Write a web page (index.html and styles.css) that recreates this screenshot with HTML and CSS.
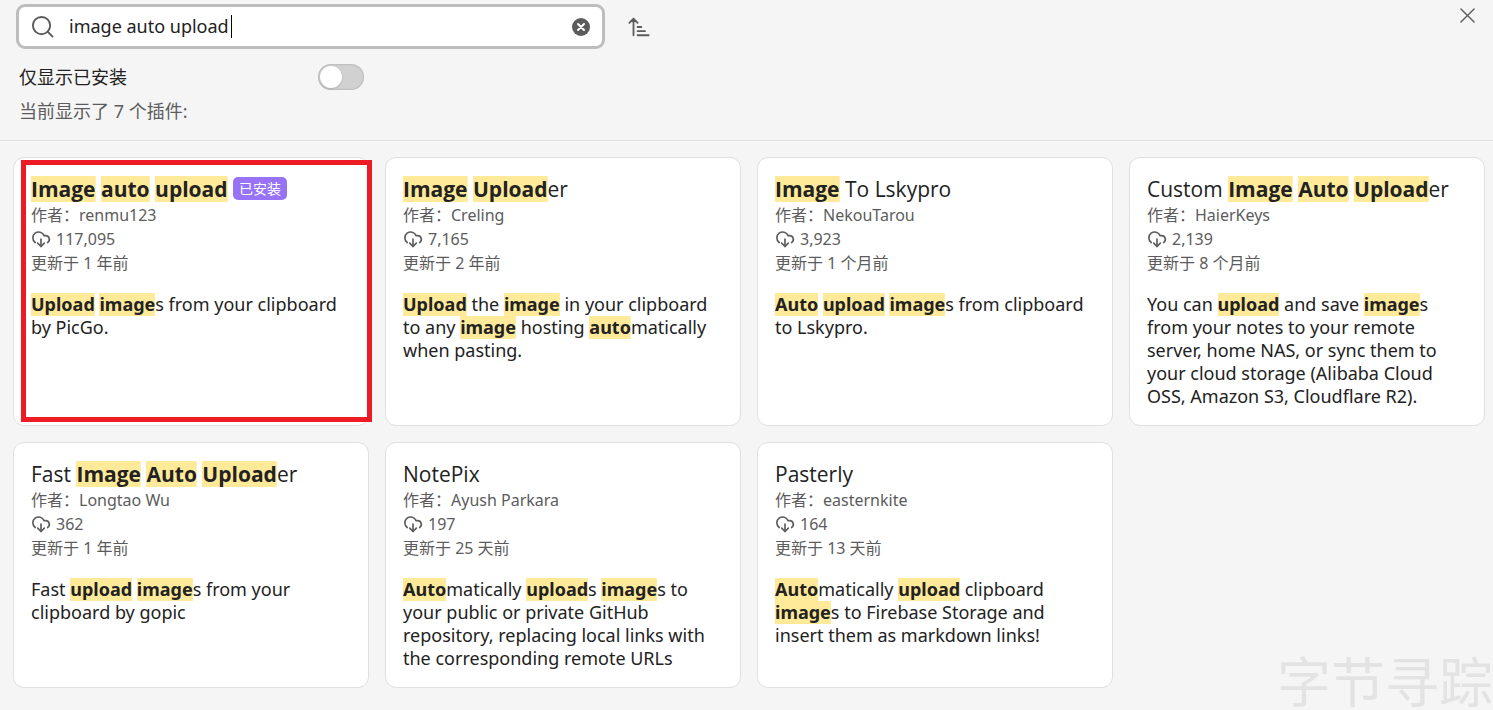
FILE: index.html
```
<!DOCTYPE html>
<html lang="zh-CN">
  <head>
    <meta charset="UTF-8" />
    <meta name="viewport" content="width=device-width, initial-scale=1.0" />
    <title>社区插件</title>
    <link rel="stylesheet" href="styles.css">
  </head>
  <body>
    <!-- Shared icon -->
    <svg class="icon-defs" aria-hidden="true">
      <symbol id="download" viewBox="0 0 24 24">
        <path d="M5 16.200A7 7 0 1 1 15.710 8h1.790a4.500 4.500 0 0 1 2.500 8.242" />
        <path d="M12 12v9" />
        <path d="m8 17 4 4 4-4" />
      </symbol>
    </svg>

    <header class="controls">
      <div class="search-row">
        <div class="search-box">
          <svg class="search-icon" viewBox="0 0 24 24">
            <circle cx="11" cy="11" r="9" />
            <path d="m17.5 17.5 5 5" />
          </svg>
          <input class="search-input" type="text" value="image auto upload" aria-label="搜索社区插件" />
          <span class="caret"></span>
          <button class="clear-button" aria-label="清除">
            <svg viewBox="0 0 18 18">
              <circle cx="9" cy="9" r="9" />
              <path d="m6 6 6 6M12 6l-6 6" />
            </svg>
          </button>
        </div>
        <button class="sort-button" aria-label="排序">
          <svg viewBox="0 0 24 24">
            <path d="M6 21V3M1.500 7.500 6 3l4.500 4.500M10.500 12h4M10.500 16.500h8M10.500 21h12" />
          </svg>
        </button>
        <button class="close-button" aria-label="关闭">
          <svg viewBox="0 0 16 16">
            <path d="m1 1 14 14M15 1 1 15" />
          </svg>
        </button>
      </div>
      <div class="setting">
        <label for="installed-only">仅显示已安装</label>
        <input class="toggle" type="checkbox" id="installed-only" />
      </div>
      <p class="summary">当前显示了 7 个插件:</p>
    </header>

    <main class="plugin-grid">
      <article class="card selected">
        <h2><mark>Image</mark> <mark>auto</mark> <mark>upload</mark> <span class="badge">已安装</span></h2>
        <p class="meta">作者：renmu123</p>
        <p class="meta"><svg class="download-icon"><use href="#download" /></svg>117,095</p>
        <p class="meta">更新于 1 年前</p>
        <p class="description"><mark>Upload</mark> <mark>image</mark>s from your clipboard by PicGo.</p>
      </article>
      <article class="card">
        <h2><mark>Image</mark> <mark>Upload</mark>er</h2>
        <p class="meta">作者：Creling</p>
        <p class="meta"><svg class="download-icon"><use href="#download" /></svg>7,165</p>
        <p class="meta">更新于 2 年前</p>
        <p class="description"><mark>Upload</mark> the <mark>image</mark> in your clipboard to any <mark>image</mark> hosting <mark>auto</mark>matically when pasting.</p>
      </article>
      <article class="card">
        <h2><mark>Image</mark> To Lskypro</h2>
        <p class="meta">作者：NekouTarou</p>
        <p class="meta"><svg class="download-icon"><use href="#download" /></svg>3,923</p>
        <p class="meta">更新于 1 个月前</p>
        <p class="description"><mark>Auto</mark> <mark>upload</mark> <mark>image</mark>s from clipboard to Lskypro.</p>
      </article>
      <article class="card">
        <h2>Custom <mark>Image</mark> <mark>Auto</mark> <mark>Upload</mark>er</h2>
        <p class="meta">作者：HaierKeys</p>
        <p class="meta"><svg class="download-icon"><use href="#download" /></svg>2,139</p>
        <p class="meta">更新于 8 个月前</p>
        <p class="description">You can <mark>upload</mark> and save <mark>image</mark>s from your notes to your remote server, home NAS, or sync them to your cloud storage (Alibaba Cloud OSS, Amazon S3, Cloudflare R2).</p>
      </article>
      <article class="card">
        <h2>Fast <mark>Image</mark> <mark>Auto</mark> <mark>Upload</mark>er</h2>
        <p class="meta">作者：Longtao Wu</p>
        <p class="meta"><svg class="download-icon"><use href="#download" /></svg>362</p>
        <p class="meta">更新于 1 年前</p>
        <p class="description">Fast <mark>upload</mark> <mark>image</mark>s from your clipboard by gopic</p>
      </article>
      <article class="card">
        <h2>NotePix</h2>
        <p class="meta">作者：Ayush Parkara</p>
        <p class="meta"><svg class="download-icon"><use href="#download" /></svg>197</p>
        <p class="meta">更新于 25 天前</p>
        <p class="description"><mark>Auto</mark>matically <mark>upload</mark>s <mark>image</mark>s to your public or private GitHub repository, replacing local links with the corresponding remote URLs</p>
      </article>
      <article class="card">
        <h2>Pasterly</h2>
        <p class="meta">作者：easternkite</p>
        <p class="meta"><svg class="download-icon"><use href="#download" /></svg>164</p>
        <p class="meta">更新于 13 天前</p>
        <p class="description"><mark>Auto</mark>matically <mark>upload</mark> clipboard <mark>image</mark>s to Firebase Storage and insert them as markdown links!</p>
      </article>
    </main>

    <div class="watermark">字节寻踪</div>
  </body>
</html>
```

FILE: styles.css
```
* {
  box-sizing: border-box;
}
body {
  margin: 0;
  background-color: #f5f5f5;
  color: #222;
  font-family: "Noto Sans", "Noto Sans CJK SC", sans-serif;
  font-size: 18px;
}
h2,
p {
  margin: 0;
}
button {
  display: flex;
  padding: 0;
  border: none;
  background: none;
  cursor: pointer;
}
svg {
  fill: none;
  stroke: #5c5c5c;
  stroke-width: 2;
  stroke-linecap: round;
  stroke-linejoin: round;
}
.icon-defs {
  position: absolute;
  width: 0;
  height: 0;
}
.controls {
  padding: 4px 16px 16px;
  border-bottom: 1px solid #e0e0e0;
}
.search-row {
  display: flex;
  align-items: center;
  gap: 23px;
}
.search-box {
  position: relative;
  display: flex;
  align-items: center;
  width: 589px;
  height: 45px;
  padding: 0 12px;
  border: 3px solid #bdbdbd;
  border-radius: 9px;
  background-color: #fff;
}
.search-icon {
  flex: none;
  width: 23px;
  height: 23px;
}
.search-input {
  flex: 1;
  min-width: 0;
  padding: 0 0 2px 15px;
  border: none;
  outline: none;
  background: none;
  color: #222;
  font: inherit;
}
/* Text cursor after the query */
.caret {
  position: absolute;
  left: 212px;
  width: 1px;
  height: 23px;
  background-color: #000;
}
.clear-button svg {
  width: 18px;
  height: 18px;
}
.clear-button circle {
  fill: #5c5c5c;
  stroke: none;
}
.clear-button path {
  stroke: #fff;
}
.sort-button svg {
  width: 22px;
  height: 22px;
}
.close-button {
  align-self: flex-start;
  margin: 4px 2px 0 auto;
}
.close-button svg {
  width: 15px;
  height: 15px;
  stroke-width: 1.5;
}
.setting {
  display: flex;
  align-items: center;
  justify-content: space-between;
  width: 348px;
  height: 26px;
  margin: 15px 0 8px;
  padding-left: 3px;
  line-height: 24px;
}
.toggle {
  appearance: none;
  width: 46px;
  height: 26px;
  margin: 0;
  padding: 2px;
  border-radius: 13px;
  background-color: #d1d1d1;
  box-shadow: inset 0 0 2px rgba(0, 0, 0, 0.3);
  cursor: pointer;
}
.toggle::before {
  content: "";
  display: block;
  width: 22px;
  height: 22px;
  border-radius: 50%;
  background-color: #fff;
  box-shadow: 0 1px 2px rgba(0, 0, 0, 0.15);
}
.toggle:checked {
  background-color: #9873f7;
}
.toggle:checked::before {
  margin-left: auto;
}
.summary {
  padding-left: 3px;
  color: #5c5c5c;
  line-height: 26px;
}
.plugin-grid {
  display: grid;
  grid-template-columns: repeat(auto-fill, minmax(320px, 1fr));
  gap: 16px;
  padding: 16px 8px 16px 13px;
}
.card {
  position: relative;
  padding: 17px;
  border: 1px solid #e0e0e0;
  border-radius: 11px;
  background-color: #fff;
}
.selected::after {
  content: "";
  position: absolute;
  top: 2px;
  right: -4px;
  bottom: 3px;
  left: 7px;
  border: 5px solid #ed1c24;
}
.card h2 {
  font-family: "Open Sans", "Noto Sans CJK SC", sans-serif;
  font-size: 21px;
  font-weight: 400;
  line-height: 28px;
}
/* Highlight is kept shorter than the glyph box so that lines do not overlap */
mark {
  background: linear-gradient(#ffea99, #ffea99) center / 100% 23px no-repeat;
  color: inherit;
  font-weight: 700;
}
h2 mark {
  background-size: 100% 26px;
}
.badge {
  display: inline-block;
  padding: 0 6px;
  border-radius: 5px;
  background-color: #9873f7;
  color: #fff;
  font-size: 14px;
  line-height: 23px;
  vertical-align: top;
  margin-top: 2px;
}
.meta {
  display: flex;
  align-items: center;
  gap: 5px;
  color: #5c5c5c;
  font-size: 16px;
  line-height: 24px;
}
.download-icon {
  width: 20px;
  height: 20px;
}
.description {
  margin-top: 18px;
  line-height: 23px;
}
.watermark {
  position: fixed;
  right: 0;
  bottom: 0;
  color: #e3e3e3;
  font-size: 54px;
  line-height: 56px;
  pointer-events: none;
}
```
